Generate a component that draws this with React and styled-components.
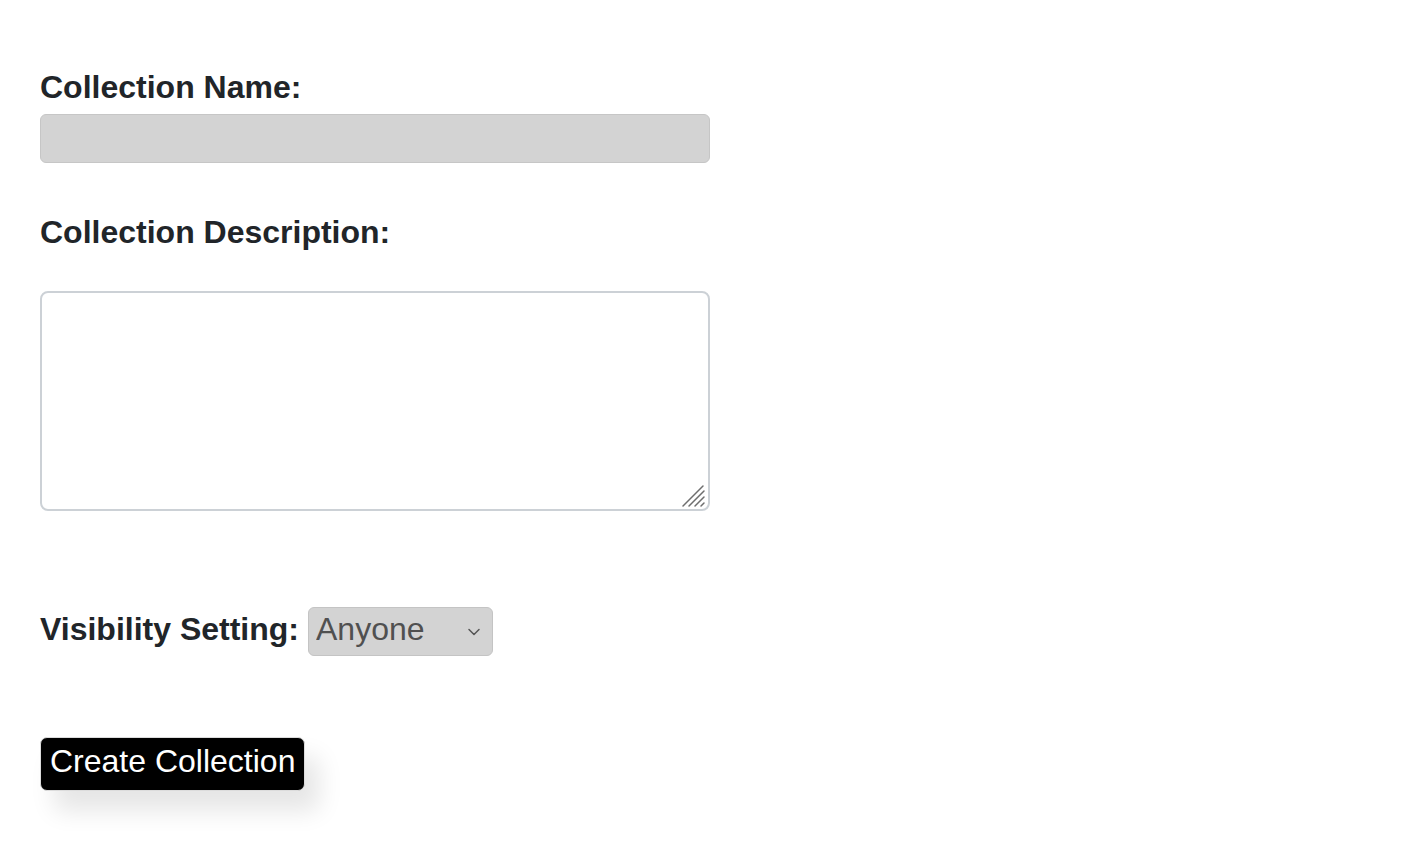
import styled, { createGlobalStyle } from "styled-components";

const GlobalStyle = createGlobalStyle`
  body {
    margin: 0;
    background: #ffffff;
    font-family: "Liberation Sans", Arial, sans-serif;
  }
`;

export default function App() {
  return (
    <>
      <GlobalStyle />
      <Form onSubmit={(e) => e.preventDefault()}>
        <Label htmlFor="name">Collection Name:</Label>
        <NameInput id="name" type="text" />
        <Label htmlFor="desc" $top={51}>Collection Description:</Label>
        <AreaWrap>
          <DescArea id="desc" />
          <Grip width="26" height="26" viewBox="0 0 26 26">
            <path d="M2 24 L22 4 M8 24 L23 9 M14 24 L23 15 M20 24 L23 21" stroke="#6e6e6e" strokeWidth="1.5" strokeLinecap="round" />
          </Grip>
        </AreaWrap>
        <VisibilityRow>
          <Label htmlFor="vis" $top={4}>Visibility Setting:</Label>
          <SelectWrap>
            <Select id="vis" defaultValue="anyone">
              <option value="anyone">Anyone</option>
              <option value="me">Only me</option>
            </Select>
            <Chevron width="14" height="10" viewBox="0 0 14 10">
              <path d="M2 2.5 L7 7.5 L12 2.5" fill="none" stroke="#555" strokeWidth="1.5" strokeLinecap="round" strokeLinejoin="round" />
            </Chevron>
          </SelectWrap>
        </VisibilityRow>
        <CreateButton type="submit">Create Collection</CreateButton>
      </Form>
    </>
  );
}

const Form = styled.form`
  display: flex;
  flex-direction: column;
  align-items: flex-start;
  padding: 69px 0 40px 40px;
`;

const Label = styled.label`
  display: block;
  margin-top: ${(props) => (props.$top !== undefined ? props.$top : 0)}px;
  font-size: 32px;
  line-height: 36px;
  font-weight: 700;
  color: #212529;
`;

const NameInput = styled.input`
  box-sizing: border-box;
  width: 670px;
  height: 49px;
  margin-top: 9px;
  background: #d3d3d3;
  border: 1px solid #c6c6c6;
  border-radius: 6px;
  font-size: 24px;
  padding: 0 10px;
  outline: none;
`;

const AreaWrap = styled.div`
  position: relative;
  display: flex;
  margin-top: 41px;
`;

const DescArea = styled.textarea`
  box-sizing: border-box;
  width: 670px;
  height: 220px;
  background: #ffffff;
  border: 2px solid #ccd1d6;
  border-radius: 8px;
  font-family: "Liberation Sans", Arial, sans-serif;
  font-size: 18px;
  padding: 8px;
  outline: none;
  resize: none;
`;

const Grip = styled.svg`
  position: absolute;
  right: 3px;
  bottom: 3px;
  pointer-events: none;
`;

const VisibilityRow = styled.div`
  display: flex;
  align-items: flex-start;
  gap: 9px;
  margin-top: 96px;
`;

const SelectWrap = styled.div`
  position: relative;
  display: flex;
`;

const Select = styled.select`
  appearance: none;
  box-sizing: border-box;
  width: 185px;
  height: 49px;
  padding: 0 30px 5px 7px;
  background: #d3d3d3;
  border: 1px solid #c4c4c4;
  border-radius: 6px;
  font-family: "Liberation Sans", Arial, sans-serif;
  font-size: 32px;
  color: #505050;
  outline: none;
`;

const Chevron = styled.svg`
  position: absolute;
  right: 12px;
  top: 20px;
  pointer-events: none;
`;

const CreateButton = styled.button`
  margin-top: 81px;
  box-sizing: border-box;
  height: 54px;
  padding: 0 9px 6px;
  background: #000000;
  color: #ffffff;
  border: 1px solid #dcdcdc;
  border-radius: 7px;
  font-family: "Liberation Sans", Arial, sans-serif;
  font-size: 32px;
  line-height: 36px;
  box-shadow: 14px 20px 24px rgba(0, 0, 0, 0.1);
  cursor: pointer;
`;
